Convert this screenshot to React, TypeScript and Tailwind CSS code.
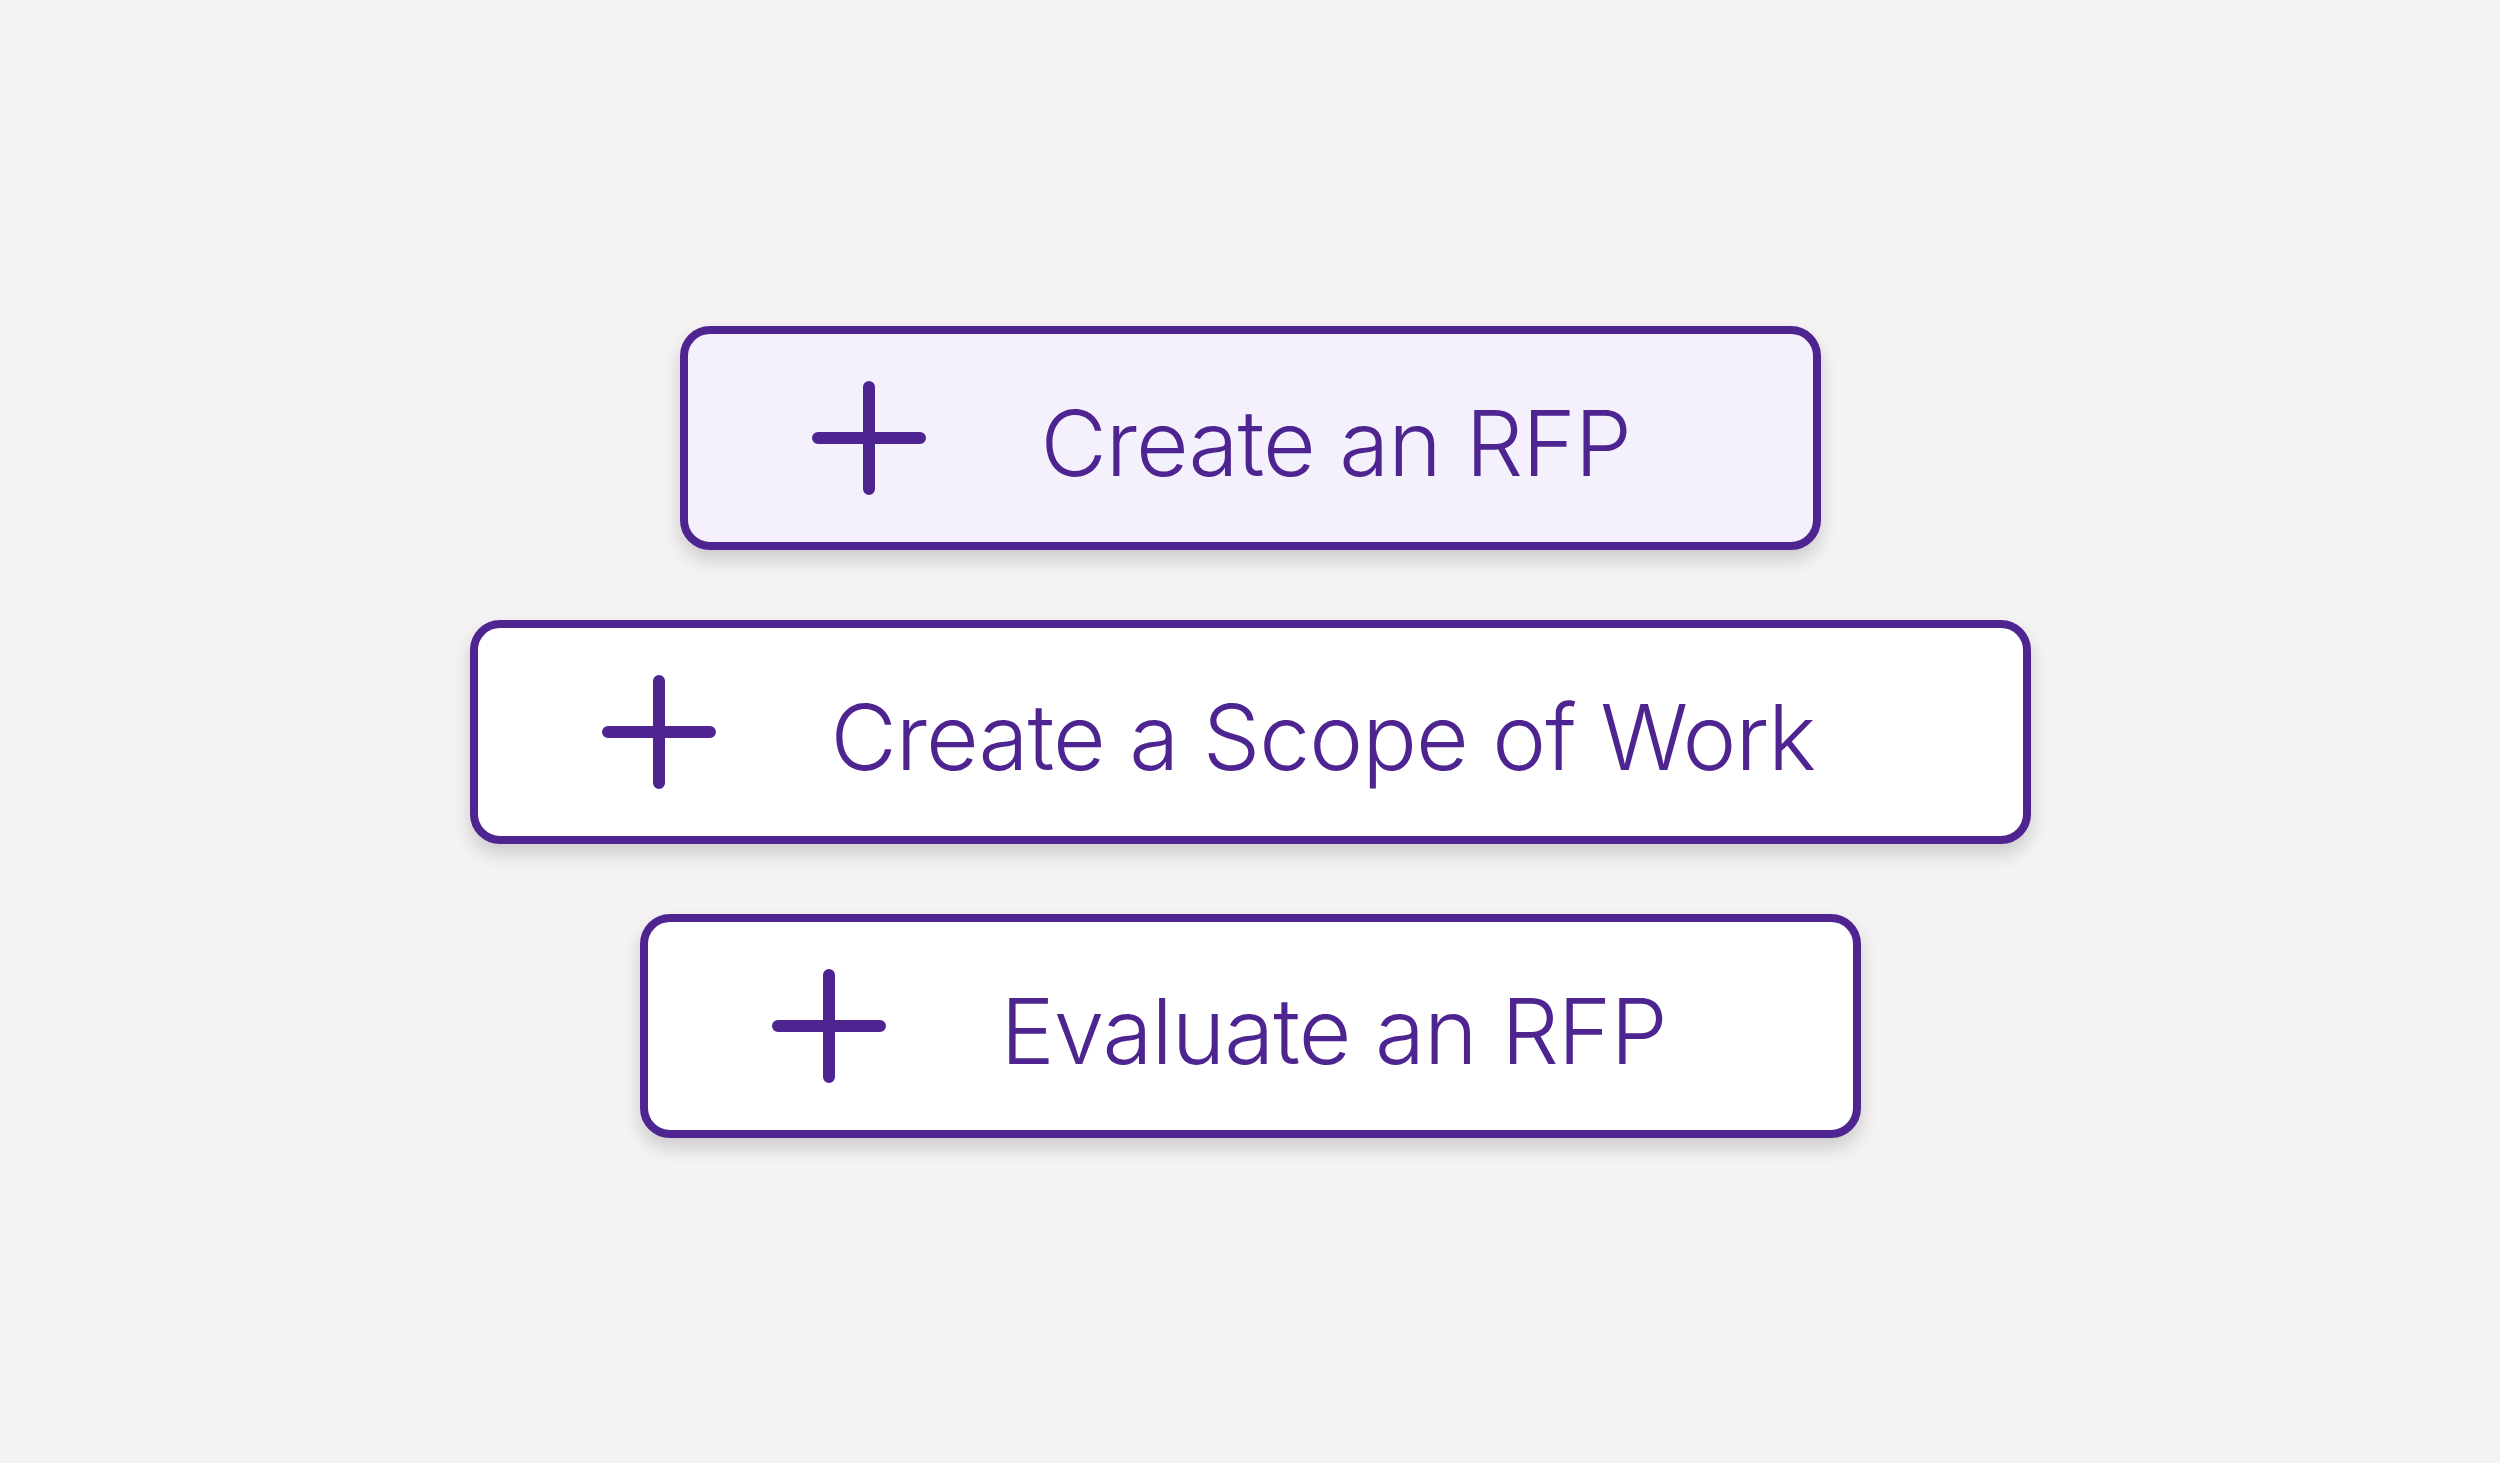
import React from 'react';

const actions = [
    { label: 'Create an RFP', width: 'w-[1141px]', active: true },
    { label: 'Create a Scope of Work', width: 'w-[1561px]', active: false },
    { label: 'Evaluate an RFP', width: 'w-[1221px]', active: false },
];

const PlusIcon = () => (
    <svg className="w-[114px] h-[114px] shrink-0" viewBox="0 0 114 114" fill="none" stroke="currentColor" strokeWidth="12" strokeLinecap="round">
        <path d="M57 6v102M6 57h102" />
    </svg>
);

const App: React.FC = () => {
    return (
        <div className="min-h-screen w-full bg-[#f4f2f3] flex flex-col items-center justify-center gap-[70px] font-['Inter',sans-serif]">
            {actions.map(action => (
                <button
                    key={action.label}
                    className={`${action.width} h-[224px] flex items-center pl-[124px] gap-[115px] rounded-[30px] border-[8px] border-[#4e2590] text-[#4e2590] shadow-[0_10px_18px_rgba(0,0,0,0.16)] ${action.active ? 'bg-[#f4f1fd]' : 'bg-white'}`}
                >
                    <PlusIcon />
                    <span className="text-[91px] font-light leading-none tracking-[-1px] whitespace-nowrap pt-[11px]">{action.label}</span>
                </button>
            ))}
        </div>
    );
};

export default App;
